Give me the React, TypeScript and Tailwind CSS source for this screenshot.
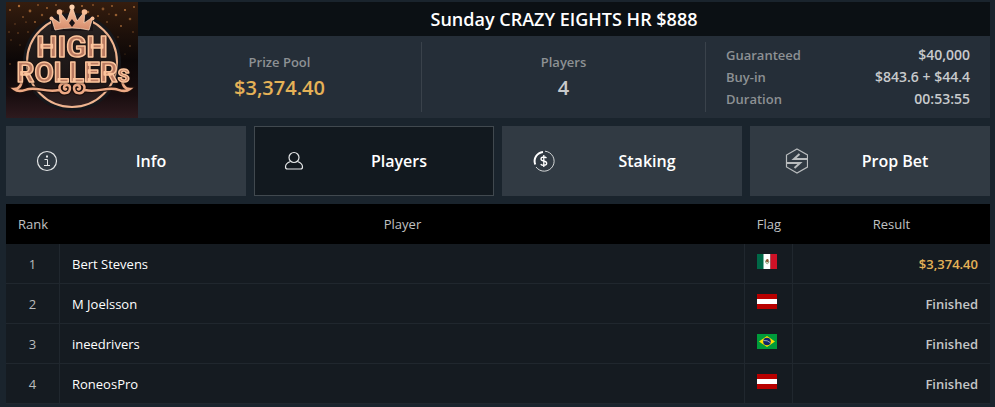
import { useState } from "react";
import type { ReactNode } from "react";

const stats = [
	{ label: "Prize Pool", value: "$3,374.40", color: "text-[#e5b257]" },
	{ label: "Players", value: "4", color: "text-[#c8cacc]" },
];

const details = [
	{ label: "Guaranteed", value: "$40,000" },
	{ label: "Buy-in", value: "$843.6 + $44.4" },
	{ label: "Duration", value: "00:53:55" },
];

const players = [
	{ rank: 1, name: "Bert Stevens", flag: "mx", result: "$3,374.40", won: true },
	{ rank: 2, name: "M Joelsson", flag: "at", result: "Finished", won: false },
	{ rank: 3, name: "ineedrivers", flag: "br", result: "Finished", won: false },
	{ rank: 4, name: "RoneosPro", flag: "at", result: "Finished", won: false },
];

// x, y, radius, opacity
const sparks = [
	[4, 8, 1, 0.6], [9, 22, 0.7, 0.5], [13, 4, 1.2, 0.7], [17, 15, 0.8, 0.8],
	[22, 30, 0.8, 0.5], [24, 9, 1.4, 0.6], [29, 20, 0.9, 0.7], [32, 3, 0.8, 0.8],
	[36, 13, 1.2, 0.5], [41, 6, 0.9, 0.7], [46, 18, 0.7, 0.6], [50, 3, 1, 0.5],
	[57, 9, 0.8, 0.6], [76, 4, 1, 0.7], [82, 10, 1.3, 0.6], [87, 3, 0.8, 0.8],
	[92, 14, 1, 0.7], [97, 7, 1.4, 0.5], [101, 20, 0.8, 0.7], [106, 4, 1, 0.6],
	[110, 13, 1.3, 0.6], [115, 24, 0.9, 0.7], [119, 8, 1, 0.8], [124, 17, 1.3, 0.5],
	[128, 5, 0.9, 0.7], [127, 30, 0.8, 0.5], [112, 35, 0.7, 0.5], [5, 38, 0.8, 0.4],
	[14, 43, 0.7, 0.4], [124, 44, 0.9, 0.4], [4, 62, 0.8, 0.5], [3, 30, 0.7, 0.6],
	[12, 31, 0.8, 0.5], [119, 52, 0.6, 0.4], [20, 20, 0.6, 0.8], [103, 12, 0.6, 0.8],
];

const scroll =
	"M16 76c0 7-3 11-8 11 5 4 10 1 15 0 9-2 18 4 30 1M62 83c-5-4-10 0-8 5 2 5 10 4 10-2 0-4-6-4-6 0 0 1 1 2 2 1";

function Logo() {
	return (
		<svg
			width="132"
			height="116"
			viewBox="0 0 132 116"
			className="shrink-0"
			role="img"
			aria-label="High Rollers"
		>
			<defs>
				<linearGradient id="night" x1="0" y1="0" x2="0" y2="1">
					<stop offset="0" stopColor="#351d0e" />
					<stop offset="0.25" stopColor="#1f110a" />
					<stop offset="0.5" stopColor="#0c0707" />
					<stop offset="0.8" stopColor="#180d0f" />
					<stop offset="1" stopColor="#2e1a1e" />
				</linearGradient>
				<linearGradient id="rose" x1="0" y1="0" x2="0" y2="1">
					<stop offset="0" stopColor="#fcc9a4" />
					<stop offset="1" stopColor="#d58b6b" />
				</linearGradient>
				<linearGradient id="disc" x1="0" y1="0" x2="0" y2="1">
					<stop offset="0" stopColor="#292322" />
					<stop offset="0.7" stopColor="#1b1515" />
					<stop offset="1" stopColor="#332122" />
				</linearGradient>
			</defs>
			<rect width="132" height="116" fill="url(#night)" />
			{sparks.map(([x, y, r, opacity]) => (
				<circle key={`${x}-${y}`} cx={x} cy={y} r={r} fill="#d98b48" opacity={opacity} />
			))}
			<circle cx="66" cy="60" r="49" fill="#16171b" />
			<circle cx="66" cy="60" r="45" fill="url(#disc)" stroke="#f0b590" strokeWidth="2" />
			{/* crown */}
			<path d="M45 14h42v15H45z" fill="#1b1416" />
			<path
				d="m49 28-4-13 9 6-1-12 8 10 5-15 5 15 8-10-1 12 9-6-4 13q-17-4-34 0Z"
				fill="url(#rose)"
				stroke="#ffdcbf"
				strokeWidth="0.7"
			/>
			<path d="m66 17 3 4-3 4-3-4Z" fill="#1b1416" />
			<circle cx="66" cy="5" r="2.6" fill="#ffd2ae" />
			<circle cx="53.5" cy="10" r="2.8" fill="#f8bd96" />
			<circle cx="78.5" cy="10" r="2.8" fill="#f8bd96" />
			<circle cx="45.5" cy="16.500" r="2" fill="#f8bd96" />
			<circle cx="86.5" cy="16.500" r="2" fill="#f8bd96" />
			{/* flourishes under the lettering */}
			<g fill="none" strokeLinecap="round">
				<path d={scroll} stroke="#1c0f0d" strokeWidth="5" />
				<path d={scroll} stroke="#eda984" strokeWidth="2.500" />
				<g transform="matrix(-1 0 0 1 132 0)">
					<path d={scroll} stroke="#1c0f0d" strokeWidth="5" />
					<path d={scroll} stroke="#eda984" strokeWidth="2.500" />
				</g>
			</g>
			<g
				fontFamily="Roboto, sans-serif"
				fontWeight="700"
				textAnchor="middle"
				fill="#b97a61"
				stroke="#fcc49c"
				strokeWidth="1.500"
				strokeLinejoin="round"
				className="drop-shadow-[0_0_1px_#1c0f0d]"
			>
				<text x="66" y="55" fontSize="30">
					HIGH
				</text>
				<text x="67" y="80" fontSize="28">
					ROLLER<tspan fontSize="19">S</tspan>
				</text>
			</g>
		</svg>
	);
}

function Icon({ children }: { children: ReactNode }) {
	return (
		<svg
			width="34"
			height="26"
			viewBox="0 0 34 26"
			fill="none"
			stroke="#e4e6e7"
			aria-hidden="true"
		>
			{children}
		</svg>
	);
}

const tabs = [
	{
		name: "Info",
		icon: (
			<Icon>
				<circle cx="17" cy="13" r="9.500" strokeWidth="1.200" />
				<path d="M14.500 11.500H17.500V17.500M14 17.500h6" />
				<path d="M16 8.500h2" strokeWidth="2" />
			</Icon>
		),
	},
	{
		name: "Players",
		icon: (
			<Icon>
				<circle cx="16" cy="9.500" r="5" strokeWidth="1.200" />
				<path
					d="M12.500 13.500C9.500 14.500 7.500 16.500 7.500 19q0 2 2 2h13q2 0 2-2c0-2.500-2-4.500-5-5.500"
					strokeWidth="1.200"
				/>
			</Icon>
		),
	},
	{
		name: "Staking",
		icon: (
			<Icon>
				<path d="M19 3.200a10 10 0 1 1-9 15.800" strokeWidth="0.900" />
				<path d="M17 4A9.300 9.300 0 0 0 9.200 16.500" stroke="#fff" strokeWidth="2" />
				<path
					d="M20.500 10q-1-1-2.800-1-2.700 0-2.700 2 0 1.500 2.700 2 3 .6 3 2.300 0 2-3 2-2 0-3-1.100M17.800 7v12"
					stroke="#fff"
					strokeWidth="1.300"
				/>
			</Icon>
		),
	},
	{
		name: "Prop Bet",
		icon: (
			<Icon>
				<g stroke="#b9bcbe">
					<path d="m23 1 10.500 6v12L23 25l-10.500-6V7Z" strokeWidth="1.200" />
					<path d="M33.500 11H20l5.500-5M12.500 15H26l-5.500 5" strokeWidth="2" />
				</g>
			</Icon>
		),
	},
];

function Flag({ code }: { code: string }) {
	if (code === "mx") {
		return (
			<svg width="20" height="15" viewBox="0 0 20 15" role="img" aria-label="Mexico">
				<path d="M0 0h7v15H0z" fill="#006847" />
				<path d="M6.500 0h7v15h-7z" fill="#fff" />
				<path d="M13.500 0H20v15h-6.500z" fill="#ce1126" />
				<path d="M8.300 6.500q.2 3 2 3.200 1.600-.2 1.600-2.700" fill="none" stroke="#86a276" />
				<path d="M9 6q1-1.700 2.300-.8l.5 1.800-1.300 1.500L9 7.500Z" fill="#8b5430" />
			</svg>
		);
	}
	if (code === "br") {
		return (
			<svg width="20" height="15" viewBox="0 0 20 15" role="img" aria-label="Brazil">
				<path d="M0 0h20v15H0z" fill="#009b3a" />
				<path d="m10 2 8 5.500-8 5.500-8-5.500Z" fill="#fedf00" />
				<circle cx="10" cy="7.500" r="3.800" fill="#10236b" />
				<path d="M6.500 6.500q4-.5 7 2.300" fill="none" stroke="#b9c6cf" strokeWidth="0.800" />
			</svg>
		);
	}
	return (
		<svg width="20" height="15" viewBox="0 0 20 15" role="img" aria-label="Austria">
			<path d="M0 0h20v15H0z" fill="#b80000" />
			<path d="M0 5h20v5H0z" fill="#fff" />
		</svg>
	);
}

export default function App() {
	const [active, setActive] = useState("Players");

	return (
		<div className="min-h-screen bg-[#1a242d] pt-0.5 pr-[5px] pb-[3px] pl-1.5 font-['Open_Sans',sans-serif]">
			<header className="flex">
				<Logo />
				<div className="flex flex-1 flex-col">
					<h1 className="bg-[#0b1014] text-center text-lg leading-[34px] font-semibold text-white">
						Sunday CRAZY EIGHTS HR $888
					</h1>
					<div className="grid flex-1 grid-cols-3 bg-[#252e38] py-1.5">
						{stats.map((stat) => (
							<dl
								key={stat.label}
								className="flex flex-col items-center border-r border-[#3a424b] pt-2.5 font-semibold"
							>
								<dt className="text-[13px] leading-5 text-[#8d9194]">{stat.label}</dt>
								<dd className={`text-xl leading-8 ${stat.color}`}>{stat.value}</dd>
							</dl>
						))}
						<dl className="flex flex-col justify-center px-5 font-semibold">
							{details.map((detail) => (
								<div key={detail.label} className="flex justify-between leading-[22px]">
									<dt className="text-[13px] text-[#8d9194]">{detail.label}</dt>
									<dd className="text-sm leading-[22px] text-[#c8cacc]">{detail.value}</dd>
								</div>
							))}
						</dl>
					</div>
				</div>
			</header>

			<nav className="mt-2 grid grid-cols-4 gap-2">
				{tabs.map((tab) => (
					<button
						key={tab.name}
						type="button"
						onClick={() => setActive(tab.name)}
						className={`flex h-[70px] items-center border pr-[31px] pl-[23px] text-base font-semibold text-white ${
							active === tab.name
								? "border-[#41494f] bg-[#12191f]"
								: "border-[#313a43] bg-[#313a43]"
						}`}
					>
						{tab.icon}
						<span className="flex-1 pl-6 text-center">{tab.name}</span>
					</button>
				))}
			</nav>

			<table className="mt-2 w-full table-fixed border-separate border-spacing-0 text-[13px] leading-5">
				<colgroup>
					<col className="w-[54px]" />
					<col />
					<col className="w-12" />
					<col className="w-[197px]" />
				</colgroup>
				<thead>
					<tr className="h-10 bg-black text-[#c0c2c3]">
						<th className="p-0 font-normal">Rank</th>
						<th className="p-0 font-normal">Player</th>
						<th className="p-0 font-normal">Flag</th>
						<th className="p-0 font-normal">Result</th>
					</tr>
				</thead>
				<tbody>
					{players.map((player) => (
						<tr
							key={player.rank}
							className="h-10 bg-[#151b21] *:border-b *:border-[#20272e] *:not-last:border-r"
						>
							<td className="text-center text-[#b9bbbd]">{player.rank}</td>
							<td className="px-3 text-white">{player.name}</td>
							<td className="pb-1 pl-3">
								<Flag code={player.flag} />
							</td>
							<td
								className={`px-3 text-right font-semibold ${
									player.won ? "text-[#e5b257]" : "text-[#c4c6c8]"
								}`}
							>
								{player.result}
							</td>
						</tr>
					))}
				</tbody>
			</table>
		</div>
	);
}
